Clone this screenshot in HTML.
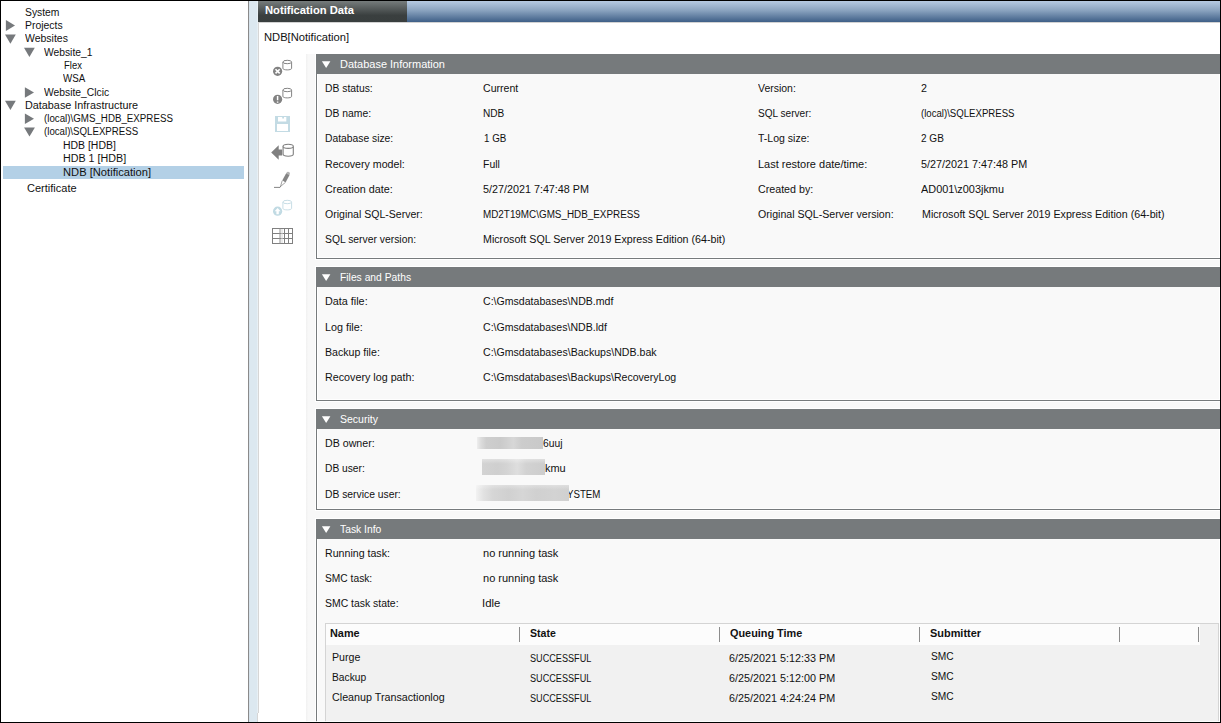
<!DOCTYPE html>
<html lang="en">
<head>
<meta charset="utf-8">
<title>Notification Data</title>
<style>
html,body{margin:0;padding:0;}
body{width:1221px;height:723px;position:relative;overflow:hidden;background:#fff;font-family:"Liberation Sans",sans-serif;}
div,span,svg{position:absolute;}
.t{font-size:11.7px;line-height:14px;height:14px;white-space:pre;color:#111;transform-origin:0 0;}
.w{color:#fff;}
.b{font-weight:bold;}
.frame{left:0;top:0;width:1219px;height:721px;border:1px solid #000;z-index:50;}
.sec-o{left:315px;right:0;background:#fff;}
.sec{left:316px;width:903px;border:1px solid #767a7c;background:#f9f9f9;box-shadow:inset 0 0 0 1px #fff;}
.sh{left:316px;width:905px;height:20px;background:#767a7c;}
.sep{width:1px;top:627px;height:15px;background:#8c8c8c;}
.rd{z-index:5;}
</style>
</head>
<body>
<!-- left tree panel -->
<div style="left:248px;top:1px;width:1px;height:721px;background:#8a8a8a"></div>
<div style="left:249px;top:1px;width:9px;height:721px;background:linear-gradient(to right,#d4e0e9 0,#dce8f0 1.5px,#dce8f0 7.5px,#edf3f7 9px)"></div>
<div style="left:258px;top:22px;width:1px;height:700px;background:#d6d6d6"></div>
<div style="left:257px;top:713px;width:2px;height:9px;background:linear-gradient(to right,#d6d6d6 0,#d6d6d6 1px,#fff 1px)"></div>
<div style="left:3px;top:166px;width:241px;height:13px;background:#b3d0e6"></div>
<svg width="60" height="150" viewBox="0 0 60 150" style="left:0;top:0" fill="#76797c">
<polygon points="5.9,20.1 5.9,30.9 15,25.5"/>
<polygon points="5,34.5 15.8,34.5 10.4,43.7"/>
<polygon points="24,47.8 34.8,47.8 29.4,57"/>
<polygon points="24.9,87.2 24.9,97.8 34,92.5"/>
<polygon points="5,100.8 15.8,100.8 10.4,110.1"/>
<polygon points="24.9,113.5 24.9,124 34,118.7"/>
<polygon points="24.1,127.4 34.9,127.4 29.5,136.6"/>
</svg>

<!-- title bar -->
<div style="left:258px;top:1px;width:149px;height:21px;background:linear-gradient(to bottom,#767c7c 0,#3a3f3f 68%,#393e3e 100%)"></div>
<div style="left:407px;top:1px;width:813px;height:21px;background:linear-gradient(to bottom,#b6cae2 0,#8aa3bf 45%,#3f5f87 100%)"></div>
<div style="left:259px;top:22px;width:961px;height:1px;background:#d2d2d2"></div>

<!-- toolbar icons -->
<svg width="40" height="200" viewBox="266 54 40 200" style="left:266px;top:54px" fill="none">
<!-- icon1: db + x circle -->
<g stroke="#848484" stroke-width="1">
<path d="M282.9,62 L282.9,68.4 C282.9,70.4 291.6,70.4 291.6,68.4 L291.6,62" fill="#fff"/>
<ellipse cx="287.25" cy="62" rx="4.35" ry="1.7" fill="#fff"/>
</g>
<circle cx="277.6" cy="71.3" r="4.6" fill="#828282"/>
<path d="M275.5,69.2 L279.7,73.4 M279.7,69.2 L275.5,73.4" stroke="#fff" stroke-width="1.6"/>
<!-- icon2: db + ! circle -->
<g stroke="#848484" stroke-width="1">
<path d="M282.9,90 L282.9,96.4 C282.9,98.4 291.6,98.4 291.6,96.4 L291.6,90" fill="#fff"/>
<ellipse cx="287.25" cy="90" rx="4.35" ry="1.7" fill="#fff"/>
</g>
<circle cx="277.6" cy="99.3" r="4.6" fill="#828282"/>
<path d="M277.6,96 L277.6,100.2 M277.6,101.4 L277.6,102.8" stroke="#fff" stroke-width="1.5"/>
<!-- icon3: save (disabled light blue) -->
<rect x="275" y="116" width="15" height="16" fill="#c3dbe4"/>
<rect x="278" y="117" width="8.3" height="4.5" fill="#fff"/>
<rect x="282.2" y="116.5" width="1.8" height="2" fill="#c3dbe4"/>
<rect x="277" y="124" width="11" height="7" fill="#fff"/>
<!-- icon4: arrow + db -->
<path d="M271.2,152.5 L278.7,145.3 L278.7,149.4 L282.2,149.4 L282.2,155.6 L278.7,155.6 L278.7,159.8 Z" fill="#808080"/>
<g stroke="#808080" stroke-width="1.1">
<path d="M283.1,146.3 L283.1,154.3 C283.1,156.8 293.3,156.8 293.3,154.3 L293.3,146.3" fill="#fff"/>
<ellipse cx="288.2" cy="146.3" rx="5.1" ry="2.1" fill="#fff"/>
</g>
<!-- icon5: pencil -->
<path d="M288.1,173.7 L287.7,174.4" stroke="#b4b4b4" stroke-width="3.7" stroke-linecap="round"/>
<path d="M287.75,174.3 L283.9,181.5" stroke="#858585" stroke-width="3.8" stroke-linecap="butt"/>
<path d="M282.2,180.7 L280.5,186.5 L285.4,182.4" stroke="#8a8a8a" stroke-width="0.8" fill="#fff"/>
<path d="M274,187.4 L280,187.4 L280.7,186.2" stroke="#777" stroke-width="0.9"/>
<!-- icon6: db + up circle (disabled) -->
<g stroke="#c8dee6" stroke-width="1">
<path d="M282.9,202 L282.9,208.4 C282.9,210.4 291.6,210.4 291.6,208.4 L291.6,202" fill="#fff"/>
<ellipse cx="287.25" cy="202" rx="4.35" ry="1.7" fill="#fff"/>
</g>
<circle cx="277.6" cy="211.2" r="4.6" fill="#c0dae3"/>
<path d="M277.6,208 L280.6,211.2 L278.8,211.2 L278.8,214.2 L276.4,214.2 L276.4,211.2 L274.6,211.2 Z" fill="#fff"/>
<!-- icon7: grid -->
<g stroke="#808080" stroke-width="1">
<rect x="272.5" y="228.5" width="20" height="15"/>
<path d="M272.5,233.5 H292.5 M272.5,238.5 H292.5 M288.5,228.5 V243.5 M284.5,228.5 V243.5"/>
<path d="M280,228.5 V243.5" stroke="#909090"/><path d="M282,229 V243" stroke="#d8d8d8"/>
</g>

</svg>

<!-- content container -->
<div style="left:306px;top:54px;width:914px;height:668px;background:linear-gradient(to right,#f1f1f1 0,#f8f8f8 2.5px,#f8f8f8 100%)"></div>

<!-- sections -->
<div class="sec-o" style="top:53px;height:207px"></div>
<div class="sec" style="top:54px;height:203px"></div>
<div class="sh" style="top:54px"></div>

<div class="sec-o" style="top:266px;height:136px"></div>
<div class="sec" style="top:267px;height:132px"></div>
<div class="sh" style="top:267px"></div>

<div class="sec-o" style="top:408px;height:103px"></div>
<div class="sec" style="top:409px;height:99px"></div>
<div class="sh" style="top:409px"></div>

<div class="sec-o" style="top:518px;height:210px"></div>
<div class="sec" style="top:519px;height:210px"></div>
<div class="sh" style="top:519px"></div>

<svg width="20" height="500" viewBox="316 54 20 500" style="left:316px;top:54px" fill="#fff">
<polygon points="321.9,61.2 330.4,61.2 326.15,68.1"/>
<polygon points="321.9,274.2 330.4,274.2 326.15,281.1"/>
<polygon points="321.9,416.2 330.4,416.2 326.15,423.1"/>
<polygon points="321.9,526.2 330.4,526.2 326.15,533.1"/>
</svg>

<!-- task table -->
<div style="left:325px;top:623px;width:894px;height:100px;background:#f1f1f1;box-sizing:border-box;border:1px solid #d4d4d4;border-bottom:0"></div>
<div style="left:326px;top:624px;width:874px;height:21px;background:#fcfcfc"></div>
<div class="sep" style="left:519px"></div>
<div class="sep" style="left:719px"></div>
<div class="sep" style="left:919px"></div>
<div class="sep" style="left:1119px"></div>
<div class="sep" style="left:1198px"></div>

<!-- redaction blurs -->
<div class="rd" style="left:477px;top:437px;width:66px;height:12px;background:linear-gradient(to right,#eeeeee 0,#dcdcdc 6%,#cecece 14%,#cacaca 35%,#d0d0d0 45%,#d7d7d7 55%,#cccccc 68%,#c9c9c9 100%)"></div>
<div class="rd" style="left:482px;top:459px;width:63px;height:16px;background:linear-gradient(to bottom,rgba(255,255,255,.35) 0,rgba(255,255,255,0) 30%),linear-gradient(to right,#d3d3d3 0,#cfcfcf 25%,#d4d4d4 40%,#dedede 56%,#d2d2d2 70%,#cdcdcd 100%)"></div>
<div class="rd" style="left:476px;top:485px;width:93px;height:16px;background:linear-gradient(to bottom,rgba(255,255,255,.3) 0,rgba(255,255,255,0) 30%),linear-gradient(to right,#f2f2f2 0,#e2e2e2 8%,#d6d6d6 18%,#d0d0d0 35%,#d6d6d6 50%,#d0d0d0 65%,#d3d3d3 85%,#d0d0d0 100%)"></div>

<!-- texts -->
<span class="t" style="left:25.20px;top:5.00px;transform:scaleX(0.8841)">System</span>
<span class="t" style="left:25.20px;top:18.00px;transform:scaleX(0.8920)">Projects</span>
<span class="t" style="left:25.00px;top:31.00px;transform:scaleX(0.8957)">Websites</span>
<span class="t" style="left:44.30px;top:44.60px;transform:scaleX(0.8806)">Website_1</span>
<span class="t" style="left:63.60px;top:57.80px;transform:scaleX(0.8095)">Flex</span>
<span class="t" style="left:63.40px;top:71.00px;transform:scaleX(0.8350)">WSA</span>
<span class="t" style="left:44.20px;top:84.60px;transform:scaleX(0.8813)">Website_Clcic</span>
<span class="t" style="left:25.40px;top:97.90px;transform:scaleX(0.9258)">Database Infrastructure</span>
<span class="t" style="left:44.03px;top:110.80px;transform:scaleX(0.8339)">(local)\GMS_HDB_EXPRESS</span>
<span class="t" style="left:44.03px;top:123.80px;transform:scaleX(0.8287)">(local)\SQLEXPRESS</span>
<span class="t" style="left:63.18px;top:137.80px;transform:scaleX(0.8942)">HDB [HDB]</span>
<span class="t" style="left:63.16px;top:150.60px;transform:scaleX(0.9176)">HDB 1 [HDB]</span>
<span class="t" style="left:63.13px;top:164.70px;transform:scaleX(0.9553)">NDB [Notification]</span>
<span class="t" style="left:26.90px;top:181.00px;transform:scaleX(0.9422)">Certificate</span>
<span class="t b w" style="left:264.50px;top:3.00px;transform:scaleX(0.9587)">Notification Data</span>
<span class="t" style="left:264.10px;top:30.00px;transform:scaleX(0.9567)">NDB[Notification]</span>
<span class="t w" style="left:339.80px;top:57.00px;transform:scaleX(0.9394)">Database Information</span>
<span class="t w" style="left:339.80px;top:270.00px;transform:scaleX(0.8821)">Files and Paths</span>
<span class="t w" style="left:339.80px;top:412.00px;transform:scaleX(0.8991)">Security</span>
<span class="t w" style="left:339.80px;top:522.00px;transform:scaleX(0.8843)">Task Info</span>
<span class="t" style="left:325.00px;top:81.00px;transform:scaleX(0.8851)">DB status:</span>
<span class="t" style="left:325.00px;top:106.00px;transform:scaleX(0.8875)">DB name:</span>
<span class="t" style="left:325.00px;top:131.00px;transform:scaleX(0.8824)">Database size:</span>
<span class="t" style="left:325.00px;top:156.60px;transform:scaleX(0.9092)">Recovery model:</span>
<span class="t" style="left:325.00px;top:182.00px;transform:scaleX(0.9225)">Creation date:</span>
<span class="t" style="left:325.00px;top:206.70px;transform:scaleX(0.9009)">Original SQL-Server:</span>
<span class="t" style="left:325.00px;top:232.00px;transform:scaleX(0.8852)">SQL server version:</span>
<span class="t" style="left:482.80px;top:81.00px;transform:scaleX(0.9062)">Current</span>
<span class="t" style="left:483.00px;top:106.00px;transform:scaleX(0.8641)">NDB</span>
<span class="t" style="left:483.70px;top:131.00px;transform:scaleX(0.8384)">1 GB</span>
<span class="t" style="left:483.00px;top:156.60px;transform:scaleX(0.8938)">Full</span>
<span class="t" style="left:483.00px;top:182.00px;transform:scaleX(0.9214)">5/27/2021 7:47:48 PM</span>
<span class="t" style="left:483.00px;top:206.70px;transform:scaleX(0.8448)">MD2T19MC\GMS_HDB_EXPRESS</span>
<span class="t" style="left:483.00px;top:232.00px;transform:scaleX(0.9135)">Microsoft SQL Server 2019 Express Edition (64-bit)</span>
<span class="t" style="left:758.30px;top:81.00px;transform:scaleX(0.8956)">Version:</span>
<span class="t" style="left:758.30px;top:106.00px;transform:scaleX(0.8614)">SQL server:</span>
<span class="t" style="left:758.30px;top:131.00px;transform:scaleX(0.8996)">T-Log size:</span>
<span class="t" style="left:758.30px;top:156.60px;transform:scaleX(0.9394)">Last restore date/time:</span>
<span class="t" style="left:758.30px;top:182.00px;transform:scaleX(0.9141)">Created by:</span>
<span class="t" style="left:758.30px;top:206.70px;transform:scaleX(0.9078)">Original SQL-Server version:</span>
<span class="t" style="left:921.00px;top:81.00px;transform:scaleX(0.9167)">2</span>
<span class="t" style="left:921.00px;top:106.00px;transform:scaleX(0.8229)">(local)\SQLEXPRESS</span>
<span class="t" style="left:921.00px;top:131.00px;transform:scaleX(0.8570)">2 GB</span>
<span class="t" style="left:921.00px;top:156.60px;transform:scaleX(0.9241)">5/27/2021 7:47:48 PM</span>
<span class="t" style="left:921.00px;top:182.00px;transform:scaleX(0.9322)">AD001\z003jkmu</span>
<span class="t" style="left:922.00px;top:206.70px;transform:scaleX(0.9143)">Microsoft SQL Server 2019 Express Edition (64-bit)</span>
<span class="t" style="left:325.00px;top:294.00px;transform:scaleX(0.9242)">Data file:</span>
<span class="t" style="left:325.00px;top:319.60px;transform:scaleX(0.9217)">Log file:</span>
<span class="t" style="left:325.00px;top:345.00px;transform:scaleX(0.9074)">Backup file:</span>
<span class="t" style="left:325.00px;top:370.00px;transform:scaleX(0.9187)">Recovery log path:</span>
<span class="t" style="left:483.00px;top:294.00px;transform:scaleX(0.9045)">C:\Gmsdatabases\NDB.mdf</span>
<span class="t" style="left:483.00px;top:319.60px;transform:scaleX(0.9034)">C:\Gmsdatabases\NDB.ldf</span>
<span class="t" style="left:483.00px;top:345.00px;transform:scaleX(0.9057)">C:\Gmsdatabases\Backups\NDB.bak</span>
<span class="t" style="left:483.00px;top:370.00px;transform:scaleX(0.9037)">C:\Gmsdatabases\Backups\RecoveryLog</span>
<span class="t" style="left:325.00px;top:435.60px;transform:scaleX(0.9113)">DB owner:</span>
<span class="t" style="left:325.00px;top:460.80px;transform:scaleX(0.8757)">DB user:</span>
<span class="t" style="left:325.00px;top:486.90px;transform:scaleX(0.8832)">DB service user:</span>
<span class="t" style="left:325.00px;top:546.00px;transform:scaleX(0.9085)">Running task:</span>
<span class="t" style="left:325.00px;top:571.00px;transform:scaleX(0.8760)">SMC task:</span>
<span class="t" style="left:325.00px;top:596.00px;transform:scaleX(0.8913)">SMC task state:</span>
<span class="t" style="left:483.00px;top:546.00px;transform:scaleX(0.9429)">no running task</span>
<span class="t" style="left:483.00px;top:571.00px;transform:scaleX(0.9429)">no running task</span>
<span class="t" style="left:482.03px;top:596.00px;transform:scaleX(0.9686)">Idle</span>
<span class="t b" style="left:330.00px;top:626.00px;transform:scaleX(0.9310)">Name</span>
<span class="t b" style="left:529.60px;top:626.00px;transform:scaleX(0.9044)">State</span>
<span class="t b" style="left:729.60px;top:626.00px;transform:scaleX(0.9296)">Queuing Time</span>
<span class="t b" style="left:929.60px;top:626.00px;transform:scaleX(0.9346)">Submitter</span>
<span class="t" style="left:331.90px;top:650.00px;transform:scaleX(0.9092)">Purge</span>
<span class="t" style="left:331.90px;top:670.00px;transform:scaleX(0.8763)">Backup</span>
<span class="t" style="left:331.90px;top:690.00px;transform:scaleX(0.9175)">Cleanup Transactionlog</span>
<span class="t" style="left:529.60px;top:651.00px;transform:scaleX(0.7802)">SUCCESSFUL</span>
<span class="t" style="left:529.60px;top:671.00px;transform:scaleX(0.7802)">SUCCESSFUL</span>
<span class="t" style="left:529.60px;top:691.00px;transform:scaleX(0.7802)">SUCCESSFUL</span>
<span class="t" style="left:728.80px;top:651.00px;transform:scaleX(0.9232)">6/25/2021 5:12:33 PM</span>
<span class="t" style="left:728.80px;top:671.00px;transform:scaleX(0.9232)">6/25/2021 5:12:00 PM</span>
<span class="t" style="left:728.80px;top:691.00px;transform:scaleX(0.9232)">6/25/2021 4:24:24 PM</span>
<span class="t" style="left:930.70px;top:649.00px;transform:scaleX(0.8734)">SMC</span>
<span class="t" style="left:930.70px;top:669.00px;transform:scaleX(0.8734)">SMC</span>
<span class="t" style="left:930.70px;top:689.00px;transform:scaleX(0.8734)">SMC</span>
<span class="t" style="left:543.00px;top:435.60px;transform:scaleX(0.8837)">6uuj</span>
<span class="t" style="left:544.60px;top:460.70px;transform:scaleX(0.9361)">kmu</span>
<span class="t" style="left:567.30px;top:486.80px;transform:scaleX(0.8298)">YSTEM</span>

<div style="left:306px;top:721px;width:914px;height:1px;background:rgba(255,255,255,.8);z-index:40"></div>
<div class="frame"></div>
</body>
</html>
